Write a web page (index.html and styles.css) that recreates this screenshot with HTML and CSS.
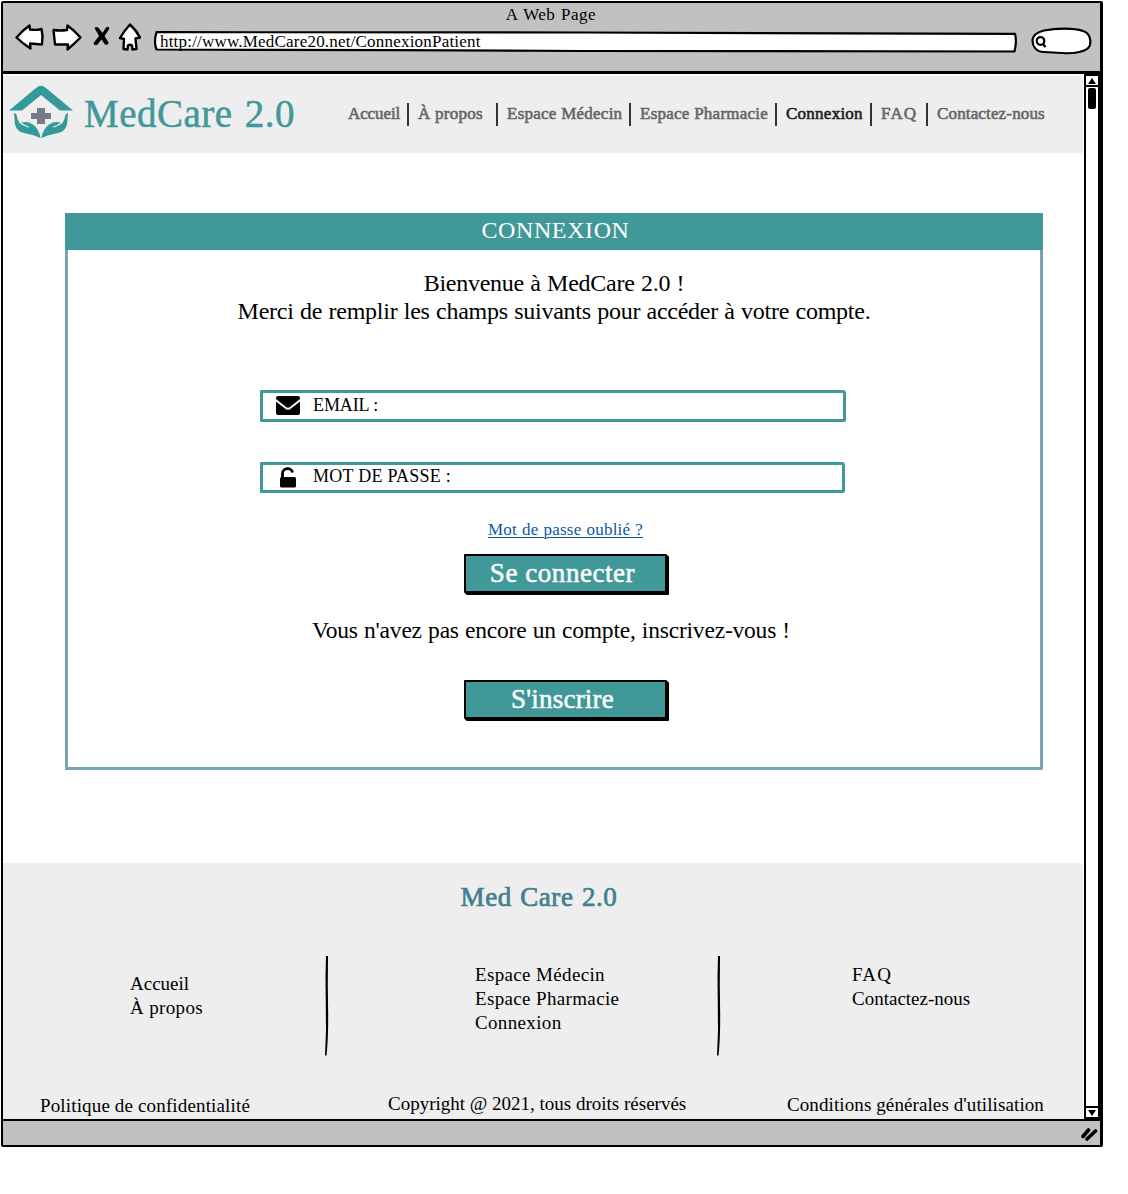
FILE: index.html
```html
<!DOCTYPE html>
<html lang="fr">
<head>
<meta charset="utf-8">
<title>MedCare 2.0 – Connexion</title>
<link rel="stylesheet" href="styles.css">
</head>
<body>
<div class="window">
  <div class="toolbar">
    <div class="window-title">A Web Page</div>
    <div class="controls">
      <svg class="nav-icons" width="126" height="30" viewBox="0 0 126 30" fill="#fff" stroke="#000" stroke-width="2.4" stroke-linejoin="round">
        <path d="M1.500 15.500Q8 8 14.500 3.500L15 7.500Q21 8.500 26.500 7L27.500 14 27 22.500 15 21.500 15.500 26.500Q7 21 1.500 15.500Z"/>
        <path d="M38.500 8Q45 9 52 8L52.500 3.500Q60 9 65.500 15.500Q59 22 52.500 27.500L53 22.500 40 22.500Z"/>
        <path d="M79.500 6Q82 3.500 84.500 7L87.500 11 91 5.500Q93.500 3.500 94.500 6.500L89.500 14 93.500 20.500Q93.500 23.500 90 22.500L86.500 17.500 82 23Q79 24 78.500 21L84 14Z" fill="#000" stroke="none"/>
        <path d="M115 2.500Q121 8 125 15.500L120.500 16.500 121.500 27 117.500 27.500 117 23.500Q115 22 113 23.500L112.500 27.500 108.500 27 109 17 105 16Q109 9 115 2.500Z"/>
      </svg>
      <div class="address">
        <svg class="sketch" viewBox="0 0 863 22" width="863" height="22" fill="#fff" stroke="#000" stroke-width="2.200" stroke-linejoin="round"><path d="M2.500 1.200 430 1.500 861 2.800Q863 11 860.500 20.500L430 20 240 19.200 2.500 18.500Q-.5 11 2.500 1.200Z"/></svg>
        <span class="url">http://www.MedCare20.net/ConnexionPatient</span>
      </div>
      <svg class="search" width="62" height="28" viewBox="0 0 62 28" fill="#fff" stroke="#000" stroke-width="2.200">
        <path d="M13 3.500C26 1 43 1 52 4C59 6 60 13 59 18C57 25 42 27 31 26L13 25C5 25 1.500 19 1.500 14C1.500 9 6 5 13 3.500Z"/>
        <circle cx="9.500" cy="14" r="3.800"/><path d="m12 17 2.500 3"/>
      </svg>
    </div>
  </div>

  <div class="viewport">
    <div class="page">
      <header class="site-header">
        <svg class="logo" width="66" height="54" viewBox="0 0 66 54">
          <path fill="#339999" d="M0 25.500 27 3Q32-1.500 37 3L64 25.500H51L32 10 13 25.500Z"/>
          <path fill="#777a8a" d="M28 23h8v5h6v6h-6v5h-8v-5h-6v-6h6Z"/>
          <path fill="#339999" d="M5 28Q8 28.500 8.500 34L10.500 38Q13 40 19 42.500L20.500 42Q16.500 40.500 12 37.500Q19 36 24 39.500Q30.500 44.500 31.500 53Q25 49.500 17 48.500Q8 47.500 6 39.500Z"/>
          <path fill="#339999" d="M59 28Q56 28.500 55.500 34L53.500 38Q51 40 45 42.500L43.500 42Q47.500 40.500 52 37.500Q45 36 40 39.500Q33.500 44.500 32.500 53Q39 49.500 47 48.500Q56 47.500 58 39.500Z"/>
        </svg>
        <div class="brand">MedCare 2.0</div>
        <nav class="menu">
          <a class="tight">Accueil</a><a>À propos</a><a>Espace Médecin</a><a>Espace Pharmacie</a><a class="current">Connexion</a><a class="wide">FAQ</a><a class="tight-last">Contactez-nous</a>
        </nav>
      </header>

      <main class="panel">
        <h1 class="panel-title">CONNEXION</h1>
        <div class="panel-body">
          <p class="welcome">Bienvenue à MedCare 2.0 !<br>Merci de remplir les champs suivants pour accéder à votre compte.</p>
          <div class="field email">
            <svg width="24" height="19" viewBox="0 0 24 19"><path d="M2 0H22Q24 0 24 2V3L14 11Q12 12.500 10 11L0 3V2Q0 0 2 0Z"/><path d="M0 5.500 9 12.500Q12 15 15 12.500L24 5.500V17Q24 19 22 19H2Q0 19 0 17Z"/></svg>
            <span>EMAIL :</span>
          </div>
          <div class="field password">
            <svg width="24" height="21" viewBox="0 0 24 21"><path d="M6.500 11V6.500C6.500 .3 16 .3 16.500 5.500" fill="none" stroke="#000" stroke-width="2.800"/><rect x="4" y="10" width="16" height="10.500" rx="1.500"/></svg>
            <span>MOT DE PASSE :</span>
          </div>
          <a class="forgot">Mot de passe oublié ?</a>
          <button class="action login">Se connecter</button>
          <p class="invite">Vous n'avez pas encore un compte, inscrivez-vous !</p>
          <button class="action signup">S'inscrire</button>
        </div>
      </main>

      <footer class="site-footer">
        <div class="footer-brand">Med Care 2.0</div>
        <div class="columns">
          <div class="column first"><a class="even">Accueil</a><a>À propos</a></div>
          <svg class="divider" width="5" height="100" viewBox="0 0 5 100"><path d="M2 0H4L3.800 30 4.200 60Q4.200 85 2.500 99.500H1L2 75 1.500 20Z"/></svg>
          <div class="column second"><a>Espace Médecin</a><a>Espace Pharmacie</a><a>Connexion</a></div>
          <svg class="divider" width="5" height="100" viewBox="0 0 5 100"><path d="M2 0H4L3.800 30 4.200 60Q4.200 85 2.500 99.500H1L2 75 1.500 20Z"/></svg>
          <div class="column third"><a class="wide">FAQ</a><a class="even">Contactez-nous</a></div>
        </div>
        <div class="legal">
          <span class="privacy">Politique de confidentialité</span>
          <span class="copyright">Copyright @ 2021, tous droits réservés</span>
          <span class="terms">Conditions générales d'utilisation</span>
        </div>
      </footer>
    </div>
    <div class="scrollbar">
      <div class="arrow"><svg width="8" height="6"><path d="M4 0 8 6H0Z"/></svg></div>
      <div class="thumb"></div>
      <div class="arrow down"><svg width="8" height="6"><path d="M0 0H8L4 6Z"/></svg></div>
    </div>
  </div>

  <div class="statusbar">
    <svg width="17" height="14" viewBox="0 0 17 14" stroke="#000" stroke-width="3.600" stroke-linecap="round"><path d="M2 9.500 7.500 3M6 12 14.500 4"/></svg>
  </div>
</div>
</body>
</html>
```
FILE: styles.css
```css
* { box-sizing: border-box; }
body {
  margin: 0;
  padding: 1px 0 0 1px;
  background: #fff;
  color: #000;
  font-family: "Liberation Serif", "Times New Roman", serif;
}
h1, p { margin: 0; font-weight: 400; }
svg { display: block; flex: none; }

.window {
  width: 1102px;
  height: 1146px;
  border: solid #000;
  border-width: 2px 3px 2px 2px;
  border-radius: 2px;
  display: flex;
  flex-direction: column;
}

/* Browser chrome */
.toolbar {
  height: 71px;
  flex: none;
  background: #c1c1c1;
  border-bottom: 3px solid #000;
}
.window-title {
  height: 19px;
  line-height: 23px;
  padding-right: 1px;
  text-align: center;
  font-size: 17px;
  letter-spacing: .5px;
  word-spacing: 1px;
}
.controls { display: flex; align-items: flex-start; padding-left: 12px; }
.nav-icons { margin-right: 13px; }
.address { position: relative; width: 863px; height: 22px; margin: 9px 14px 0 0; }
.sketch { position: absolute; inset: 0; }
.url {
  position: relative;
  display: block;
  padding-left: 6px;
  font-size: 17px;
  line-height: 21px;
  letter-spacing: .2px;
}
.search { margin-top: 5px; }
.viewport { flex: 1; display: flex; min-height: 0; }
.page { width: 1080px; padding-top: 2px; display: flex; flex-direction: column; }
.scrollbar {
  width: 16px;
  margin-left: 1px;
  border: 2px solid #000;
  display: flex;
  flex-direction: column;
  align-items: center;
}
.arrow {
  width: 100%;
  height: 11px;
  border-bottom: 2px solid #000;
  display: grid;
  place-items: center;
}
.arrow.down { margin-top: auto; border-bottom: 0; border-top: 2px solid #000; }
.thumb { width: 8px; height: 21px; margin-top: 1px; border-radius: 2px; background: #000; }
.statusbar {
  height: 26px;
  flex: none;
  background: #c1c1c1;
  border-top: 2px solid #000;
  display: flex;
  justify-content: flex-end;
  padding: 6px 2px 0 0;
}

/* Site header */
.site-header {
  height: 77px;
  flex: none;
  background: #eee;
  display: flex;
  align-items: center;
  padding-left: 6px;
}
.logo { margin: -5px 9px 0 0; }
.brand {
  width: 264px;
  margin-top: -2px;
  color: #419898;
  font-size: 39px;
  line-height: 46px;
  letter-spacing: .5px;
  word-spacing: 2px;
  white-space: nowrap;
  -webkit-text-stroke: .5px #419898;
}
.menu {
  display: grid;
  grid-template-columns: 61px 89px 133px 146px 95px 56px 120px;
  color: #666;
  font-size: 17px;
  line-height: 21px;
  letter-spacing: .25px;
  white-space: nowrap;
  -webkit-text-stroke: .6px;
}
.menu a { height: 23px; padding-left: 9px; border-right: 2px solid #333; }
.menu a:first-child { padding-left: 0; }
.menu a:last-child { border-right: 0; }
.menu .tight { letter-spacing: -.1px; }
.menu .tight-last { letter-spacing: .15px; }
.menu .current { color: #222; }
.menu .wide, .third .wide { letter-spacing: 1.2px; }

/* Sign-in panel */
.panel { width: 978px; height: 557px; flex: none; margin: 60px 0 93px 62px; }
.panel-title {
  height: 37px;
  background: #419898;
  color: #fff;
  text-align: center;
  padding-left: 3px;
  font-size: 24px;
  line-height: 35px;
  letter-spacing: .6px;
}
.panel-body {
  height: 520px;
  padding: 19px 0 0;
  border: solid #77a6b0;
  border-width: 0 3px 3px;
  border-radius: 0 0 2px 1px;
  display: flex;
  flex-direction: column;
  align-items: center;
}
.welcome {
  font-size: 24px;
  line-height: 28px;
  letter-spacing: -.25px;
  word-spacing: .6px;
  text-align: center;
}
.field {
  width: 586px;
  height: 32px;
  margin: 65px 2px 0 0;
  padding-left: 13px;
  border: 3px solid #419898;
  border-radius: 1px 3px 2px 1px;
  display: flex;
  align-items: center;
  font-size: 18px;
  line-height: 24px;
}
.field span { margin: -3px 0 0 13px; }
.email span { letter-spacing: -.1px; }
.email svg { margin-top: -2px; }
.password { height: 31px; margin-top: 40px; letter-spacing: .25px; width: 585px; margin-right: 3px; }
.password span { margin-top: -3px; }
.forgot {
  margin: 27px 0 0 23px;
  color: #0a57a4;
  font-size: 17px;
  line-height: 20px;
  letter-spacing: .2px;
  word-spacing: .7px;
  text-decoration: underline;
  text-underline-offset: 2px;
  text-decoration-thickness: 1px;
}
.action {
  width: 203px;
  height: 39px;
  margin-left: 23px;
  padding: 0 6px 4px 0;
  border: 2px solid #000;
  border-radius: 1px;
  background: #419898;
  box-shadow: 1px 1px #000, 2px 2px #000;
  color: #fff;
  font: 27px/34px "Liberation Serif", "Times New Roman", serif;
  letter-spacing: .55px;
  -webkit-text-stroke: .5px #fff;
}
.login { margin-top: 14px; }
.signup { letter-spacing: .2px; }
.invite {
  margin: 24px 6px 36px 0;
  font-size: 23.500px;
  line-height: 27px;
  letter-spacing: -.2px;
  word-spacing: .55px;
}

/* Footer */
.site-footer {
  flex: 1;
  background: #eee;
  border-top-right-radius: 3px;
  display: flex;
  flex-direction: column;
}
.footer-brand {
  padding: 18px 8px 0 0;
  text-align: center;
  color: #418090;
  font-size: 27px;
  line-height: 32px;
  letter-spacing: .6px;
  word-spacing: 1px;
  -webkit-text-stroke: .7px #418090;
}
.columns {
  height: 100px;
  margin-top: 43px;
  display: grid;
  grid-template-columns: 321px 5px 387px 5px 1fr;
  font-size: 19px;
  line-height: 24px;
  letter-spacing: .35px;
}
.column { display: flex; flex-direction: column; padding-top: 7px; }
.column .even { letter-spacing: 0; }
.first { padding: 16px 0 0 127px; }
.second { padding-left: 146px; }
.third { padding-left: 131px; }
.legal {
  display: grid;
  grid-template-columns: 348px 399px 1fr;
  padding: 36px 0 0 37px;
  font-size: 19px;
  line-height: 24px;
}
.privacy { margin-top: 2px; letter-spacing: .15px; }
.terms { margin-top: 1px; letter-spacing: .1px; }
```
